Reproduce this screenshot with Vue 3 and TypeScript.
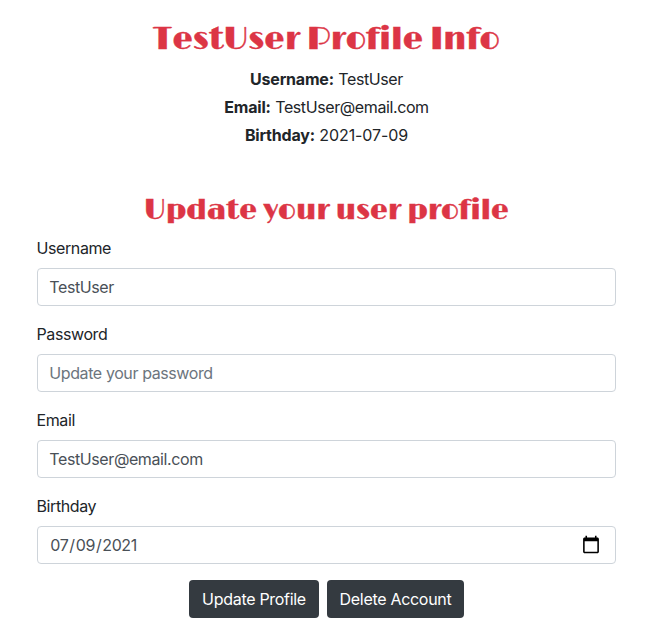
<script setup lang="ts">
import { ref } from 'vue'

const profile = [
  { label: 'Username:', value: 'TestUser' },
  { label: 'Email:', value: 'TestUser@email.com' },
  { label: 'Birthday:', value: '2021-07-09', numeric: true },
]

const username = ref('TestUser')
const password = ref('')
const email = ref('TestUser@email.com')
const birthday = ref('2021-07-09')
</script>

<template>
  <main class="page">
    <h1 class="title">TestUser Profile Info</h1>
    <section class="info">
      <p v-for="item in profile" :key="item.label">
        <strong>{{ item.label }}</strong>{{ ' ' }}<span :class="{ numeric: item.numeric }">{{ item.value }}</span>
      </p>
    </section>
    <h2 class="subtitle">Update your user profile</h2>
    <form @submit.prevent>
      <div class="group">
        <label for="username">Username</label>
        <input id="username" v-model="username" type="text" />
      </div>
      <div class="group">
        <label for="password">Password</label>
        <input id="password" v-model="password" type="password" placeholder="Update your password" />
      </div>
      <div class="group">
        <label for="email">Email</label>
        <input id="email" v-model="email" type="email" />
      </div>
      <div class="group">
        <label for="birthday">Birthday</label>
        <input id="birthday" v-model="birthday" type="date" />
      </div>
      <div class="actions">
        <button type="submit" class="update">Update Profile</button>
        <button type="button" class="delete">Delete Account</button>
      </div>
    </form>
  </main>
</template>

<style>
body {
  margin: 0;
  background: #fff;
}
</style>

<style scoped>
.page {
  box-sizing: border-box;
  height: 640px;
  padding: 20px 42px 0 37px;
  overflow: hidden;
  color: #212529;
  font-family: Inter, "Liberation Sans", sans-serif;
  font-size: 16px;
  line-height: 24px;
  letter-spacing: -0.4px;
}
.title,
.subtitle {
  margin: 0;
  color: #dc3545;
  font-family: Limelight, Inter, sans-serif;
  font-weight: 500;
  letter-spacing: 0;
  text-align: center;
  white-space: nowrap;
  -webkit-text-stroke: 0.4px #dc3545;
}
.title {
  height: 45px;
  font-size: 32px;
  line-height: 40px;
}
.subtitle {
  height: 42px;
  margin-top: 45px;
  font-size: 28px;
  line-height: 35px;
}
.info p {
  margin: 0;
  line-height: 28px;
  text-align: center;
}
.info strong {
  font-weight: 700;
  letter-spacing: -0.2px;
}
.info strong + span {
  margin-left: 0.4px;
}
.info .numeric {
  letter-spacing: -0.1px;
}
.group {
  margin-bottom: 16px;
}
label {
  display: block;
  margin-bottom: 8px;
  margin-left: -0.5px;
}
input {
  display: block;
  box-sizing: border-box;
  width: 100%;
  height: 38px;
  padding: 6px 12px 6px 11.3px;
  border: 1px solid #ced4da;
  border-radius: 4px;
  background: #fff;
  color: #495057;
  font: inherit;
  letter-spacing: inherit;
}
input::placeholder {
  color: #6c757d;
  opacity: 1;
}
input::-webkit-calendar-picker-indicator {
  width: 20px;
  height: 20px;
  margin-right: 2.5px;
  padding: 0;
}
.actions {
  display: flex;
  justify-content: center;
  gap: 8px;
}
button {
  height: 38px;
  padding: 0;
  border: 0;
  border-radius: 4px;
  background: #343a40;
  color: #fff;
  font: inherit;
  letter-spacing: -0.3px;
}
.update {
  width: 130px;
}
.delete {
  width: 137px;
}
</style>
